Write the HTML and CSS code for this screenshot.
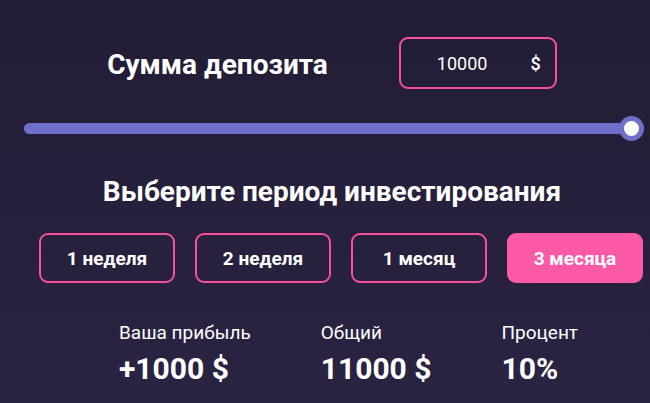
FILE: index.html
```html
<!DOCTYPE html>
<html lang="ru">
<head>
  <meta charset="UTF-8" />
  <meta name="viewport" content="width=device-width, initial-scale=1.0" />
  <title>Калькулятор депозита</title>
  <link rel="stylesheet" href="styles.css">
</head>
<body>

<div class="calc">
  <div class="deposit-row">
    <h2 class="title">Сумма депозита</h2>
    <div class="amount">
      <span class="amount-value">10000</span>
      <span class="amount-currency">$</span>
    </div>
  </div>

  <input class="range" type="range" min="100" max="10000" value="10000" />

  <h2 class="title period-title">Выберите период инвестирования</h2>

  <div class="periods">
    <button class="period">1 неделя</button>
    <button class="period">2 неделя</button>
    <button class="period">1 месяц</button>
    <button class="period active">3 месяца</button>
  </div>

  <div class="results">
    <div class="result">
      <div class="result-label">Ваша прибыль</div>
      <div class="result-value">+1000 $</div>
    </div>
    <div class="result">
      <div class="result-label">Общий</div>
      <div class="result-value">11000 $</div>
    </div>
    <div class="result">
      <div class="result-label">Процент</div>
      <div class="result-value">10%</div>
    </div>
  </div>
</div>

</body>
</html>
```

FILE: styles.css
```css
body {
  margin: 0;
  padding: 0;
  min-height: 100vh;
  background: linear-gradient(180deg, #221c35 0%, #2a2443 100%);
  font-family: Roboto, 'Liberation Sans', sans-serif;
  color: #fff;
  overflow: hidden;
}

.calc {
  padding: 37px 6px 0 24px;
}

.title {
  margin: 0;
  font-size: 28px;
  line-height: 30px;
  font-weight: 700;
}

.deposit-row {
  display: flex;
  justify-content: center;
  align-items: center;
  gap: 71px;
  padding-right: 4px;
}

.deposit-row .title {
  margin-top: 4px;
}

.amount {
  box-sizing: border-box;
  width: 158px;
  height: 52px;
  border: 2px solid #f5519e;
  border-radius: 9px;
  display: flex;
  align-items: center;
  justify-content: space-between;
  padding: 0 14px 0 36px;
  font-size: 18px;
}

.amount-currency {
  font-weight: 500;
}

.range {
  -webkit-appearance: none;
  appearance: none;
  display: block;
  width: 100%;
  height: 25px;
  margin: 27px 0 0;
  background: transparent;
}

.range::-webkit-slider-runnable-track {
  height: 11px;
  border-radius: 6px;
  background: #6e6fc9;
}

.range::-webkit-slider-thumb {
  -webkit-appearance: none;
  box-sizing: border-box;
  width: 25px;
  height: 25px;
  margin-top: -7px;
  border-radius: 50%;
  background: #fff;
  border: 5px solid #6e6fc9;
}

.period-title {
  margin-top: 36px;
  padding-right: 4px;
  text-align: center;
}

.periods {
  display: flex;
  gap: 20px;
  margin-top: 26px;
  padding-left: 15px;
}

.period {
  box-sizing: border-box;
  width: 136px;
  height: 50px;
  border: 2px solid #f5519e;
  border-radius: 9px;
  background: transparent;
  color: #fff;
  font-family: inherit;
  font-size: 19px;
  font-weight: 700;
  cursor: pointer;
}

.period.active {
  background: #fc59a7;
  border-color: #fc59a7;
}

.results {
  display: flex;
  gap: 70px;
  margin-top: 39px;
  padding-left: 95px;
}

.result-label {
  font-size: 19px;
  line-height: 22px;
}

.result-value {
  margin-top: 7px;
  font-size: 30px;
  line-height: 35px;
  font-weight: 700;
}
```
